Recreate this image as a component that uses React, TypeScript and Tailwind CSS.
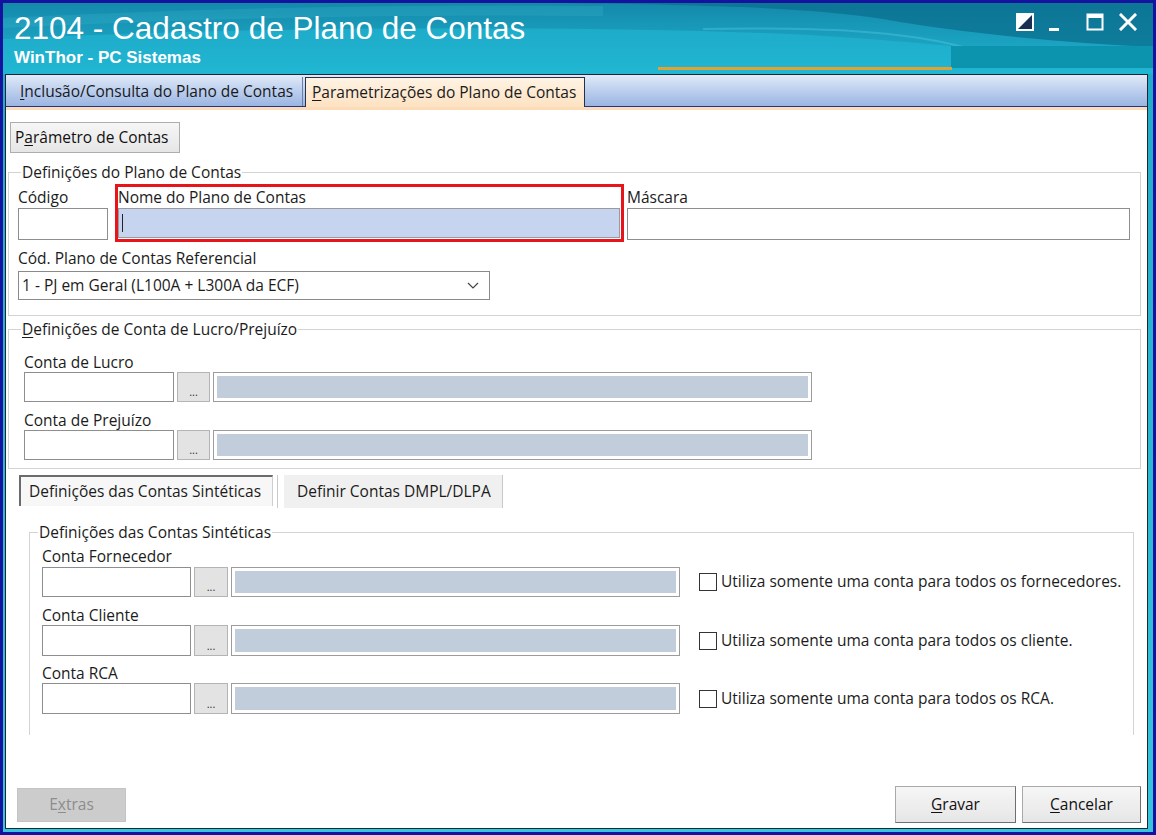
import React from "react";

// Small helper for Windows-style mnemonic underline
function U({ children }: { children: React.ReactNode }) {
  return <span className="underline underline-offset-2 decoration-1">{children}</span>;
}

function Label({ children }: { children: React.ReactNode }) {
  return <div className="h-[18px] leading-[18px] text-[15.5px] text-[#1b1b1b] whitespace-nowrap">{children}</div>;
}

function TextBox({ className = "" }: { className?: string }) {
  return <div className={`bg-white border border-[#8e8e8e] ${className}`} />;
}

function DotsButton({ className = "" }: { className?: string }) {
  return (
    <div className={`bg-[#e3e3e3] border border-[#b4b4b4] flex items-end justify-center pb-[4px] text-[11px] leading-none text-[#333] ${className}`}>
      ...
    </div>
  );
}

function DescBox({ className = "" }: { className?: string }) {
  return (
    <div className={`border border-[#9c9c9c] bg-white p-[3px] ${className}`}>
      <div className="w-full h-full bg-[#c1cddb]" />
    </div>
  );
}

// Code + lookup button + description field
function LookupRow({ code, btn, desc, h }: { code: string; btn: string; desc: string; h: string }) {
  return (
    <div className={`flex gap-[3px] ${h}`}>
      <TextBox className={code} />
      <DotsButton className={btn} />
      <DescBox className={desc} />
    </div>
  );
}

function CheckLine({ text }: { text: string }) {
  return (
    <div className="flex items-center ml-[19px] gap-[4px]">
      <div className="w-[18px] h-[18px] bg-white border border-[#333]" />
      <span className="text-[15.5px] text-[#1b1b1b] whitespace-nowrap">{text}</span>
    </div>
  );
}

function WinButton({ children, className = "" }: { children: React.ReactNode; className?: string }) {
  return (
    <div
      className={`flex items-center justify-center text-[15.5px] text-[#111] bg-[linear-gradient(180deg,#f6f6f6_0%,#e6e6e6_100%)] border border-[#a9a9a9] border-r-[#6f6f6f] border-b-[#6f6f6f] ${className}`}
    >
      {children}
    </div>
  );
}

export default function App() {
  return (
    <div className="w-[1156px] h-[835px] bg-[#1313a0] p-[3px] font-['Open_Sans','Liberation_Sans',sans-serif] overflow-hidden">
      <div className="w-full h-full flex flex-col bg-[linear-gradient(180deg,#20a9c6_0%,#37c4dc_100%)]">
        {/* ── Title bar ───────────────────────────── */}
        <div className="relative h-[71px] shrink-0 overflow-hidden bg-[linear-gradient(180deg,#1489aa_0%,#1a9ebd_45%,#1fb2cf_100%)]">
          <svg className="absolute inset-0" width="1150" height="71" viewBox="0 0 1150 71" preserveAspectRatio="none">
            <path d="M0 36 C 250 24, 520 22, 760 30 C 880 34, 960 46, 1150 60 L1150 71 L0 71 Z" fill="#22b9d6" opacity="0.55" />
            <path d="M560 0 L1150 0 L1150 44 C 1060 40, 960 30, 880 16 C 800 4, 700 2, 560 0 Z" fill="#0b6f8f" opacity="0.75" />
            <path d="M700 26 C 820 24, 900 28, 960 44 C 1000 56, 1060 62, 1150 64" stroke="#5fd0e6" strokeWidth="2" fill="none" opacity="0.35" />
            <path d="M0 20 C 200 10, 420 6, 600 8" stroke="#5ccde4" strokeWidth="10" fill="none" opacity="0.15" />
          </svg>
          {/* right flat block + orange underline */}
          <div className="absolute left-[948px] top-[43px] w-[202px] h-[22px] bg-[#0c93ad]" />
          <div className="absolute left-[655px] top-[64px] w-[294px] h-[3px] bg-[#e0a234]" />

          <div className="relative pl-[11px] pt-[10px] text-white font-['Liberation_Sans',Arial,sans-serif]">
            <div className="text-[31.5px] leading-none">2104 - Cadastro de Plano de Contas</div>
            <div className="mt-[4px] text-[17px] font-bold leading-none">WinThor - PC Sistemas</div>
          </div>

          {/* window controls */}
          <div className="absolute right-[16px] top-[10px] flex items-center">
            <svg width="18" height="18" viewBox="0 0 18 18" className="mr-[14px]">
              <rect x="1" y="1" width="16" height="16" fill="#1b2f55" stroke="white" strokeWidth="2" />
              <polygon points="1,1 17,1 1,17" fill="white" />
            </svg>
            <svg width="12" height="18" viewBox="0 0 12 18" className="mr-[26px]">
              <rect x="1" y="15" width="10" height="3" fill="white" />
            </svg>
            <svg width="18" height="18" viewBox="0 0 18 18" className="mr-[15px]">
              <rect x="1.5" y="1.5" width="15" height="15" fill="none" stroke="white" strokeWidth="2" />
              <rect x="1" y="1" width="16" height="4" fill="white" />
            </svg>
            <svg width="18" height="18" viewBox="0 0 18 18">
              <path d="M2 2 L16 16 M16 2 L2 16" stroke="white" strokeWidth="3" strokeLinecap="square" />
            </svg>
          </div>
        </div>

        {/* ── Main panel ──────────────────────────── */}
        <div className="flex-1 ml-[2px] mr-[5px] mb-[3px] flex flex-col border border-[#1d2736] bg-white min-h-0">
          {/* tab strip */}
          <div className="h-[32px] shrink-0 flex items-end pl-[2px] border-b border-[#25348a] bg-[linear-gradient(180deg,#e1eaf8_0%,#bccfee_50%,#9bb5e2_100%)]">
            <div className="h-[29px] w-[295px] flex items-center pl-[12px] text-[15.5px] text-[#1a1a1a] border-r border-[#6d7fa8]">
              <span>
                <U>I</U>nclusão/Consulta do Plano de Contas
              </span>
            </div>
            <div className="h-[30px] -mb-px ml-[2px] w-[280px] flex items-center pl-[6px] text-[15.5px] text-[#1a1a1a] border border-b-0 border-[#27304a] bg-[linear-gradient(180deg,#fff3e4_0%,#fde2c2_100%)]">
              <span className="whitespace-nowrap">
                <U>P</U>arametrizações do Plano de Contas
              </span>
            </div>
          </div>
          <div className="h-[3px] shrink-0 bg-[#fcdcb7]" />

          {/* content */}
          <div className="flex-1 flex flex-col px-[2px] min-h-0">
            <WinButton className="mt-[12px] ml-[2px] w-[170px] h-[31px] justify-start pl-[4px] bg-[linear-gradient(180deg,#e6e6e6_0%,#dcdcdc_100%)] border-[#adadad] border-r-[#adadad] border-b-[#adadad]">
              <span>
                P<U>a</U>râmetro de Contas
              </span>
            </WinButton>

            {/* Definições do Plano de Contas */}
            <fieldset className="mt-[11px] w-[1133px] border border-[#d3d3d3] pl-[9px] pr-[9px] pb-[15px]">
              <legend className="ml-[3px] px-[1px] h-[16px] leading-[16px] text-[15.5px] text-[#1b1b1b]">Definições do Plano de Contas</legend>
              <div className="flex pt-[8px]">
                <div className="w-[90px]">
                  <Label>Código</Label>
                  <TextBox className="mt-[2px] h-[32px]" />
                </div>
                <div className="relative ml-[10px] w-[502px]">
                  <Label>Nome do Plano de Contas</Label>
                  <div className="mt-[2px] h-[30px] border border-[#9a9a9a] bg-[#c6d4ef] flex items-center pl-[3px]">
                    <div className="w-px h-[18px] bg-[#222]" />
                  </div>
                  {/* red highlight annotation */}
                  <div className="absolute -left-[3px] -right-[4px] -top-[4px] -bottom-[2px] border-[3px] border-[#e8141c] pointer-events-none" />
                </div>
                <div className="ml-[7px] w-[503px]">
                  <Label>Máscara</Label>
                  <TextBox className="mt-[2px] h-[32px]" />
                </div>
              </div>
              <div className="mt-[9px]">
                <Label>Cód. Plano de Contas Referencial</Label>
                <div className="mt-[4px] w-[472px] h-[29px] border border-[#8a8a8a] bg-white flex items-center justify-between pl-[3px] pr-[10px]">
                  <span className="text-[15.5px] text-[#1b1b1b]">1 - PJ em Geral (L100A + L300A da ECF)</span>
                  <svg width="12" height="8" viewBox="0 0 12 8">
                    <path d="M1 1 L6 6 L11 1" stroke="#444" strokeWidth="1.2" fill="none" />
                  </svg>
                </div>
              </div>
            </fieldset>

            {/* Definições de Conta de Lucro/Prejuízo */}
            <fieldset className="mt-[5px] w-[1133px] border border-[#d3d3d3] pl-[15px] pb-[8px]">
              <legend className="-ml-[3px] px-[1px] h-[16px] leading-[16px] text-[15.5px] text-[#1b1b1b]">
                <U>D</U>efinições de Conta de Lucro/Prejuízo
              </legend>
              <div className="pt-[16px]">
                <Label>Conta de Lucro</Label>
                <div className="mt-[1px]">
                  <LookupRow h="h-[30px]" code="w-[150px]" btn="w-[33px]" desc="w-[599px]" />
                </div>
              </div>
              <div className="mt-[9px]">
                <Label>Conta de Prejuízo</Label>
                <div className="mt-[1px]">
                  <LookupRow h="h-[30px]" code="w-[150px]" btn="w-[33px]" desc="w-[599px]" />
                </div>
              </div>
            </fieldset>

            {/* inner tabs */}
            <div className="mt-[6px] ml-[11px] h-[33px] flex items-start">
              <div className="h-[31px] w-[254px] flex items-center pl-[8px] text-[15.5px] text-[#1b1b1b] bg-[#f7f7f7] border-t-2 border-l-2 border-[#6b6b6b] border-r border-r-[#cfcfcf] whitespace-nowrap">
                Definições das Contas Sintéticas
              </div>
              <div className="ml-[4px] w-px h-[33px] bg-[#c9c9c9]" />
              <div className="ml-[6px] h-[33px] w-[219px] flex items-center pl-[13px] text-[15.5px] text-[#1b1b1b] bg-[#f0f0f0] border-r border-[#c9c9c9] whitespace-nowrap">
                Definir Contas DMPL/DLPA
              </div>
            </div>

            {/* Definições das Contas Sintéticas */}
            <fieldset className="mt-[16px] ml-[21px] w-[1105px] border border-b-0 border-[#d3d3d3] pl-[12px] pb-[21px]">
              <legend className="-ml-[4px] px-[1px] h-[16px] leading-[16px] text-[15.5px] text-[#1b1b1b]">Definições das Contas Sintéticas</legend>
              <div className="pt-[7px]">
                <Label>Conta Fornecedor</Label>
                <div className="mt-[2px] flex items-center">
                  <LookupRow h="h-[30px]" code="w-[149px]" btn="w-[34px]" desc="w-[449px]" />
                  <CheckLine text="Utiliza somente uma conta para todos os fornecedores." />
                </div>
              </div>
              <div className="mt-[9px]">
                <Label>Conta Cliente</Label>
                <div className="mt-[1px] flex items-center">
                  <LookupRow h="h-[31px]" code="w-[149px]" btn="w-[34px]" desc="w-[449px]" />
                  <CheckLine text="Utiliza somente uma conta para todos os cliente." />
                </div>
              </div>
              <div className="mt-[8px]">
                <Label>Conta RCA</Label>
                <div className="mt-[1px] flex items-center">
                  <LookupRow h="h-[31px]" code="w-[149px]" btn="w-[34px]" desc="w-[449px]" />
                  <CheckLine text="Utiliza somente uma conta para todos os RCA." />
                </div>
              </div>
            </fieldset>

            <div className="flex-1" />

            {/* bottom buttons */}
            <div className="flex items-end pb-[5px] pl-[9px] pr-[4px]">
              <div className="mb-[1px] w-[109px] h-[34px] flex items-center justify-center text-[15.5px] text-[#8d8d8d] bg-[#cccccc] border border-[#c4c4c4]">
                <span>
                  E<U>x</U>tras
                </span>
              </div>
              <div className="flex-1" />
              <WinButton className="w-[121px] h-[37px]">
                <span>
                  <U>G</U>ravar
                </span>
              </WinButton>
              <WinButton className="ml-[6px] w-[119px] h-[37px]">
                <span>
                  <U>C</U>ancelar
                </span>
              </WinButton>
            </div>
          </div>
        </div>
      </div>
    </div>
  );
}
